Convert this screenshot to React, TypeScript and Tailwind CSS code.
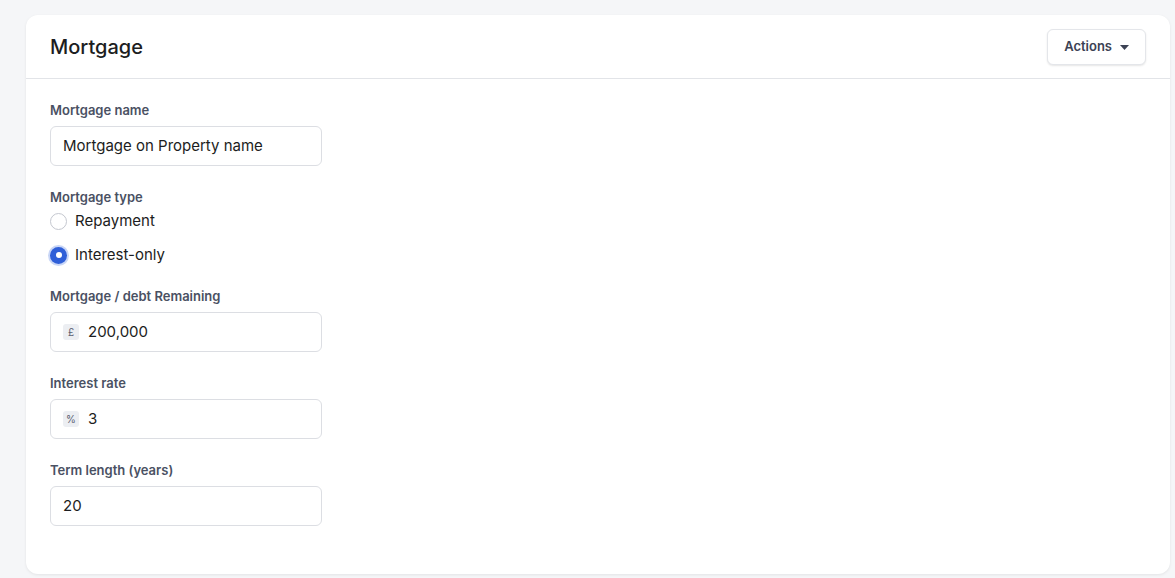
import { useState } from 'react'

const fieldLabel = 'block text-[13px] leading-4 font-semibold text-[#4a5163] mb-2'
const inputBox =
  'flex items-center w-[272px] h-10 rounded-md border border-[#dcdee3] bg-white px-3 text-[15px] text-[#1c1d21]'

function PrefixInput({ prefix, value }: { prefix?: string; value: string }) {
  return (
    <div className={inputBox}>
      {prefix && (
        <span className="mr-[9px] flex h-4 w-4 items-center justify-center rounded-[3px] bg-[#eceef2] text-[10px] leading-none text-[#5a6070]">
          {prefix}
        </span>
      )}
      <span>{value}</span>
    </div>
  )
}

function Radio({ checked, label, onClick }: { checked: boolean; label: string; onClick: () => void }) {
  return (
    <button type="button" onClick={onClick} className="flex h-5 items-center gap-2 text-[15px] leading-5 text-[#1c1d21]">
      {checked ? (
        <span className="flex h-[17px] w-[17px] items-center justify-center rounded-full bg-[#2f5fd8] ring-2 ring-[#c9d6f6]">
          <span className="h-[6px] w-[6px] rounded-full bg-white" />
        </span>
      ) : (
        <span className="h-[17px] w-[17px] rounded-full border border-[#c4c7cf] bg-white" />
      )}
      {label}
    </button>
  )
}

export default function App() {
  const [type, setType] = useState('interest')

  return (
    <div className="min-h-screen bg-[#f5f6f8] px-[26px] pt-[15px] pb-1 font-['Inter',sans-serif]">
      <div className="w-[1144px] rounded-xl bg-white shadow-[0_1px_3px_rgba(0,0,0,0.08)]">
        {/* Header */}
        <div className="flex h-[64px] items-center justify-between border-b border-[#e2e4e8] px-6">
          <h1 className="text-[20px] font-medium text-[#1c1d21]">Mortgage</h1>
          <button className="flex h-9 items-center gap-2 rounded-md border border-[#e4e6ea] bg-white px-4 text-[13px] font-semibold text-[#3c4254] shadow-[0_1px_2px_rgba(0,0,0,0.1)]">
            Actions
            <svg width="9" height="5" viewBox="0 0 9 5" className="mt-[2px]">
              <path d="M0 0h9L4.5 5z" fill="#3c4254" />
            </svg>
          </button>
        </div>

        {/* Form */}
        <div className="px-6 pt-[23px] pb-12">
          <div>
            <label className={fieldLabel}>Mortgage name</label>
            <PrefixInput value="Mortgage on Property name" />
          </div>

          <div className="mt-[23px]">
            <label className={`${fieldLabel} !mb-[6px]`}>Mortgage type</label>
            <div className="flex flex-col items-start gap-[14px]">
              <Radio checked={type === 'repayment'} label="Repayment" onClick={() => setType('repayment')} />
              <Radio checked={type === 'interest'} label="Interest-only" onClick={() => setType('interest')} />
            </div>
          </div>

          <div className="mt-[23px]">
            <label className={fieldLabel}>Mortgage / debt Remaining</label>
            <PrefixInput prefix="£" value="200,000" />
          </div>

          <div className="mt-[23px]">
            <label className={fieldLabel}>Interest rate</label>
            <PrefixInput prefix="%" value="3" />
          </div>

          <div className="mt-[23px]">
            <label className={fieldLabel}>Term length (years)</label>
            <PrefixInput value="20" />
          </div>
        </div>
      </div>
    </div>
  )
}
